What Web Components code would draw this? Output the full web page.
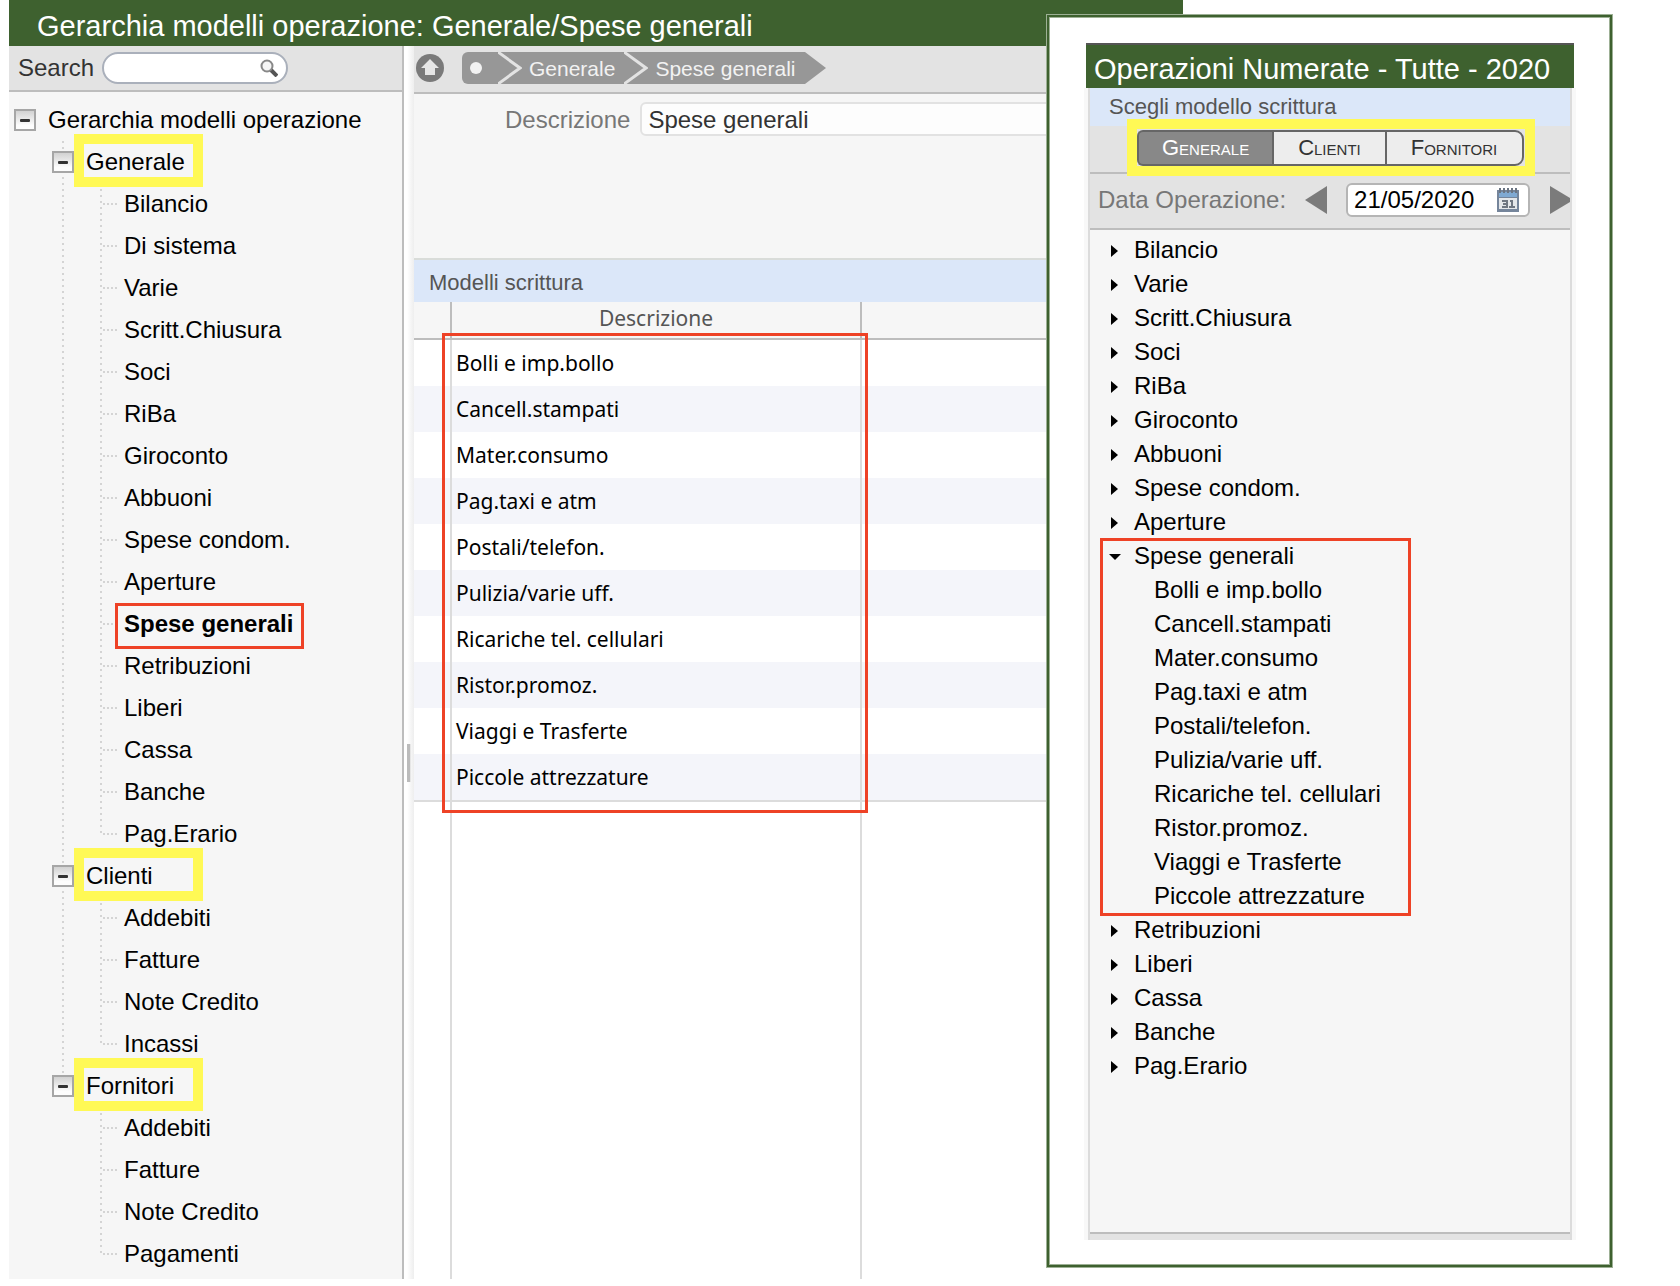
<!DOCTYPE html>
<html lang="it">
<head>
<meta charset="utf-8">
<title>Gerarchia modelli operazione</title>
<style>
  :root {
    --green: #3e612f;
    --bar: #e3e3e3;
    --panel: #f6f6f6;
    --line: #bdbdbd;
    --soft-line: #dcdcdc;
    --blue: #dbe7f9;
    --red: #ee4226;
    --yellow: #fff955;
  }
  * { box-sizing: border-box; }
  body { margin: 0; background: #fff; color: #000; font: 24px/1 "Liberation Sans", Arial, sans-serif; }
</style>
</head>
<body>
<app-desktop>
  <model-window heading="Gerarchia modelli operazione: Generale/Spese generali">
    <search-bar slot="side"></search-bar>
    <tree-item slot="side" class="root" label="Gerarchia modelli operazione" branch>
      <tree-item label="Generale" branch mark="yellow">
        <tree-item label="Bilancio"></tree-item>
        <tree-item label="Di sistema"></tree-item>
        <tree-item label="Varie"></tree-item>
        <tree-item label="Scritt.Chiusura"></tree-item>
        <tree-item label="Soci"></tree-item>
        <tree-item label="RiBa"></tree-item>
        <tree-item label="Giroconto"></tree-item>
        <tree-item label="Abbuoni"></tree-item>
        <tree-item label="Spese condom."></tree-item>
        <tree-item label="Aperture"></tree-item>
        <tree-item label="Spese generali" selected mark="red"></tree-item>
        <tree-item label="Retribuzioni"></tree-item>
        <tree-item label="Liberi"></tree-item>
        <tree-item label="Cassa"></tree-item>
        <tree-item label="Banche"></tree-item>
        <tree-item label="Pag.Erario"></tree-item>
      </tree-item>
      <tree-item label="Clienti" branch mark="yellow">
        <tree-item label="Addebiti"></tree-item>
        <tree-item label="Fatture"></tree-item>
        <tree-item label="Note Credito"></tree-item>
        <tree-item label="Incassi"></tree-item>
      </tree-item>
      <tree-item label="Fornitori" branch mark="yellow">
        <tree-item label="Addebiti"></tree-item>
        <tree-item label="Fatture"></tree-item>
        <tree-item label="Note Credito"></tree-item>
        <tree-item label="Pagamenti"></tree-item>
      </tree-item>
    </tree-item>
    <crumb-bar></crumb-bar>
    <detail-form></detail-form>
    <model-table heading="Modelli scrittura"></model-table>
  </model-window>
  <picker-window slot="overlay" heading="Operazioni Numerate - Tutte - 2020"></picker-window>
</app-desktop>

<script>
const define = (name, html, setup) => {
  const template = document.createElement('template');
  template.innerHTML = '<style>*, *::before, *::after { box-sizing: border-box; }</style>' + html;
  customElements.define(name, class extends HTMLElement {
    connectedCallback() {
      if (this.shadowRoot) return;
      const root = this.attachShadow({ mode: 'open' });
      root.append(template.content.cloneNode(true));
      if (setup) setup(this, root);
    }
  });
};
const fill = (host, root) => {
  root.querySelector('.heading').textContent = host.getAttribute('heading');
};
const entries = ['Bolli e imp.bollo', 'Cancell.stampati', 'Mater.consumo', 'Pag.taxi e atm', 'Postali/telefon.',
  'Pulizia/varie uff.', 'Ricariche tel. cellulari', 'Ristor.promoz.', 'Viaggi e Trasferte', 'Piccole attrezzature'];

define('app-desktop', `
  <style>
    :host { display: block; position: relative; padding-left: 9px; }
  </style>
  <slot></slot><slot name="overlay"></slot>`);

define('model-window', `
  <style>
    :host { display: block; width: calc(70% + 4px); }
    h1 { margin: 0; height: 46px; padding: 4px 28px 0; background: var(--green); color: #fff;
         font-size: 29px; font-weight: 400; line-height: 44px; white-space: nowrap; }
    .body { display: flex; align-items: stretch; }
    aside { flex: none; width: 395px; background: var(--panel); border-right: 2px solid var(--line); padding-bottom: 4px; }
    .splitter { flex: none; width: 10px; display: grid; grid-template-rows: 698fr 38px 497fr; justify-content: center;
         background: linear-gradient(90deg, #fff 30%, #eee); }
    .splitter i { grid-row: 2; width: 4px; background: #bbb; border-right: 1px solid #e6e6e6; }
    main { flex: 1; min-width: 0; display: flex; flex-direction: column; }
  </style>
  <h1 class="heading"></h1>
  <div class="body">
    <aside><slot name="side"></slot></aside>
    <div class="splitter"><i></i></div>
    <main><slot></slot></main>
  </div>`, fill);

define('search-bar', `
  <style>
    :host { display: flex; align-items: center; height: 46px; padding: 0 9px; gap: 8px; margin-bottom: 7px;
            background: var(--bar); border-bottom: 2px solid var(--line); }
    label { color: #333; line-height: 44px; }
    .field { display: flex; align-items: center; width: 186px; height: 32px; padding: 0 8px 0 12px; background: #fff;
             border: 2px solid #aab0bb; border-radius: 16px; }
    input { flex: 1; min-width: 0; border: 0; outline: 0; padding: 0; background: none; font: inherit; }
    svg { flex: none; }
  </style>
  <label for="q">Search</label>
  <div class="field">
    <input id="q" type="text">
    <svg width="18" height="18" viewBox="0 0 18 18" fill="none">
      <path d="M11 11l6 6" stroke="#555" stroke-width="4"/>
      <circle cx="7" cy="7" r="5.5" fill="#f6f6f6" stroke="#888" stroke-width="2"/>
    </svg>
  </div>`);

define('tree-item', `
  <style>
    :host { display: block; }
    :host(:not(.root)) {
      background: repeating-linear-gradient(180deg, #d4d4d4 0 2px, transparent 2px 6px) 15px 0 / 2px 100% no-repeat; }
    :host(:last-child:not(.root)) { background-size: 2px 21px; }
    .row { display: flex; align-items: center; gap: 12px; height: 42px; padding-left: 5px; }
    button, .tick { flex: none; width: 22px; height: 22px; }
    button { display: grid; place-items: center; padding: 0; border: 2px solid #a6a6a6; background: linear-gradient(#d2d2d2, #fdfdfd 80%); }
    button::before { content: ""; width: 10px; height: 3px; border-radius: 1px; background: #333; }
    .tick { display: flex; align-items: center; padding-left: 13px; }
    .tick::before { content: ""; flex: none; width: 16px; height: 2px;
      background: repeating-linear-gradient(90deg, #d4d4d4 0 2px, transparent 2px 4px); }
    :host([branch]) .tick, :host(:not([branch])) button { display: none; }
    .label { position: relative; line-height: 42px; white-space: nowrap; }
    :host([selected]) .label { font-weight: 700; }
    :host([mark]) .label::after { content: ""; position: absolute; }
    :host([mark=yellow]) .label::after { top: -7px; left: -12px; width: 129px; height: 53px; border: 10px solid var(--yellow); }
    :host([mark=red]) .label::after { inset: 0 -11px -4px -9px; border: 3px solid var(--red); }
    .children { padding-left: 38px; }
  </style>
  <div class="row"><button type="button"></button><span class="tick"></span><span class="label"></span></div>
  <div class="children"><slot></slot></div>`, (host, root) => {
    root.querySelector('.label').textContent = host.getAttribute('label');
    root.querySelector('button').setAttribute('aria-label', host.getAttribute('label'));
  });

define('crumb-bar', `
  <style>
    :host { display: flex; align-items: center; height: 48px; padding: 0 2px 2px; gap: 18px;
            background: var(--bar); border-bottom: 2px solid var(--line); color: #f2f2f2; font-size: 21px; }
    svg { display: block; flex: none; }
    button { border: 0; padding: 0; margin: 0; background: none; color: inherit; font: inherit; }
    nav { display: flex; height: 32px; }
    nav button { background: #979797; line-height: 34px; padding: 0 9px 0 7px; white-space: nowrap; }
    nav button.home { width: 36px; padding: 0 0 0 8px; border-radius: 6px 0 0 6px; }
  </style>
  <button type="button" aria-label="Su">
    <svg width="28" height="28" viewBox="0 0 28 28"><circle cx="14" cy="14" r="14" fill="#7a7a7a"/>
      <path d="M14 5l9 9h-4v7H9v-7H5z" fill="#e6e6e6"/></svg>
  </button>
  <nav>
    <button type="button" class="home" aria-label="Radice">
      <svg width="12" height="12" viewBox="0 0 12 12"><circle cx="6" cy="6" r="6" fill="#f2f2f2"/></svg></button>
    <svg width="24" height="32" viewBox="0 0 24 32"><path d="M0 0h24v32H0z" fill="#979797"/><path d="M0 0l22 16L0 32" fill="none" stroke="#e3e3e3" stroke-width="3"/></svg>
    <button type="button">Generale</button>
    <svg width="24" height="32" viewBox="0 0 24 32"><path d="M0 0h24v32H0z" fill="#979797"/><path d="M0 0l22 16L0 32" fill="none" stroke="#e3e3e3" stroke-width="3"/></svg>
    <button type="button">Spese generali</button>
    <svg width="21" height="32" viewBox="0 0 21 32"><path d="M0 0l21 16L0 32z" fill="#979797"/></svg>
  </nav>`);

define('detail-form', `
  <style>
    :host { display: flex; align-items: flex-start; gap: 10px; height: 166px; padding: 8px 8px 0 91px;
            background: var(--panel); border-bottom: 2px solid #d9dcd9; }
    label { color: #777; line-height: 36px; }
    input { flex: 1; min-width: 0; height: 34px; padding: 1px 6px 0; border: 2px solid #e2e2e2; border-radius: 6px;
            background: #fdfdfd; color: #333; font: inherit; }
  </style>
  <label for="d">Descrizione</label><input id="d" type="text" value="Spese generali">`);

define('model-table', `
  <style>
    :host { display: flex; flex-direction: column; flex: 1; }
    h2 { margin: 0; padding: 2px 15px 0; height: 42px; background: var(--blue); color: #555; font-size: 22px; font-weight: 400; line-height: 42px; }
    .grid { position: relative; flex: 1;
      background: linear-gradient(var(--soft-line) 0 0) 36px 0 / 2px 100% no-repeat,
                  linear-gradient(var(--soft-line) 0 0) 446px 0 / 2px 100% no-repeat #fff; }
    table { width: 100%; border-collapse: separate; border-spacing: 0; table-layout: fixed;
            font: 21px/24px "Noto Sans", sans-serif; border-bottom: 2px solid var(--soft-line); }
    .c1 { width: 38px; } .c2 { width: 410px; }
    th { height: 38px; padding: 0 0 4px; background: var(--panel); color: #555; font-weight: 400; border-bottom: 2px solid var(--line); }
    td { height: 46px; padding: 0 4px; }
    th, td { border-right: 2px solid var(--soft-line); }
    th { border-right-color: var(--line); }
    th:last-child, td:last-child { border-right: 0; }
    tbody tr:nth-child(even) { background: #f4f5fa; }
    .frame { position: absolute; left: 28px; top: 31px; width: 426px; height: 480px; border: 3px solid var(--red); }
  </style>
  <h2 class="heading"></h2>
  <div class="grid">
    <table>
      <colgroup><col class="c1"><col class="c2"><col></colgroup>
      <thead><tr><th></th><th>Descrizione</th><th></th></tr></thead>
      <tbody></tbody>
    </table>
    <div class="frame"></div>
  </div>`, (host, root) => {
    fill(host, root);
    root.querySelector('tbody').innerHTML = entries.map(t => `<tr><td></td><td>${t}</td><td></td></tr>`).join('');
  });

define('segment-control', `
  <style>
    :host { display: flex; position: relative; height: 36px; }
    :host::after { content: ""; position: absolute; inset: -11px -11px -10px -10px; border: 10px solid var(--yellow); pointer-events: none; }
    button { margin: 0; padding: 0 24px; border: 2px solid #666; border-right-width: 0; background: #ededed; color: #333;
             font: 22px/32px "Liberation Sans", Arial, sans-serif; font-variant: small-caps; }
    button:first-of-type { padding: 0 23px; border-radius: 6px 0 0 6px; background: #888; color: #fff; }
    button:last-of-type { padding: 0 25px 0 24px; border-radius: 0 9px 9px 0; border-right-width: 2px; }
  </style>
  <button type="button">Generale</button><button type="button">Clienti</button><button type="button">Fornitori</button>`);

define('date-bar', `
  <style>
    :host { display: flex; align-items: center; height: 56px; padding: 0 0 2px 8px; background: var(--bar); border-bottom: 2px solid var(--line); }
    label { color: #777; line-height: 50px; white-space: nowrap; }
    button { flex: none; border: 0; padding: 0; background: none; }
    svg { display: block; }
    .prev { margin: 0 19px; }
    .field { display: flex; align-items: center; flex: 1; min-width: 0; max-width: 184px; height: 34px; padding: 0 8px 0 6px; background: #fff;
             border: 2px solid #b5b5b5; border-radius: 6px; }
    input { flex: 1; min-width: 0; border: 0; padding: 0; background: none; color: #000; font: inherit; }
    .next { margin-left: auto; }
  </style>
  <label for="date">Data Operazione:</label>
  <button type="button" class="prev" aria-label="Giorno precedente"><svg width="22" height="28" viewBox="0 0 22 28"><path d="M22 0v28L0 14z" fill="#7b7b7b"/></svg></button>
  <div class="field">
    <input id="date" type="text" value="21/05/2020">
    <button type="button" aria-label="Calendario">
      <svg width="24" height="24" viewBox="0 0 24 24">
        <path d="M1 2h22v22H1z" fill="#75859b"/><path d="M3 10h18v11H3z" fill="#e4e7ea"/><path d="M3 4h18v5H3z" fill="#7fa9d2"/>
        <path d="M4 0v5M8 0v5M12 0v5M16 0v5M20 0v5" stroke="#6a7482" stroke-width="2"/>
        <path d="M6 13h5v6H6M7 16h4M14 13h2v6M13 19h6" fill="none" stroke="#6f7782" stroke-width="2"/>
      </svg>
    </button>
  </div>
  <button type="button" class="next" aria-label="Giorno successivo"><svg width="20" height="28" viewBox="0 0 20 28"><path d="M0 0l20 12v4L0 28z" fill="#7b7b7b"/></svg></button>`);

define('menu-group', `
  <style>
    :host { display: block; position: relative; }
    .row, .child { line-height: 34px; height: 34px; white-space: nowrap; }
    .row { display: flex; align-items: center; }
    .arrow { flex: none; display: grid; place-items: center; width: 44px; padding: 2px 0 0 5px; }
    .arrow::before { content: ""; border: 6px solid transparent; border-width: 6px 0 6px 7px; border-left-color: #000; }
    :host([open]) .arrow::before { border: 6px solid transparent; border-bottom-width: 0; border-top-color: #000; }
    .child { padding-left: 64px; }
    :host([open])::after { content: ""; position: absolute; left: 10px; top: -1px; bottom: -3px; width: 311px; border: 3px solid var(--red); }
  </style>
  <div class="row"><span class="arrow"></span><span class="label"></span></div>
  <div class="children"></div>`, (host, root) => {
    root.querySelector('.label').textContent = host.getAttribute('label');
    if (host.hasAttribute('open'))
      root.querySelector('.children').innerHTML = entries.map(t => `<div class="child">${t}</div>`).join('');
  });

define('picker-window', `
  <style>
    :host { position: absolute; top: 14px; right: 67px; bottom: 11px; width: 567px; display: flex; flex-direction: column;
            padding: 28px 36px 27px 37px; background: #fff; border: 1px solid #9db095;
            box-shadow: inset 0 0 0 2px var(--green), inset 0 0 0 3px #9db095; }
    h1 { margin: 0 2px; height: 45px; padding: 4px 8px 0; background: var(--green); border-top: 2px solid #555; color: #fff;
         font-size: 29px; font-weight: 400; line-height: 40px; white-space: nowrap; }
    .pad { flex: 1; display: flex; padding: 0 4px; background: #f8f8f8; }
    .body { flex: 1; min-width: 0; display: flex; flex-direction: column; background: var(--panel); border: 2px solid var(--soft-line); border-width: 0 2px; }
    h2 { margin: 0; height: 38px; padding: 0 19px; background: var(--blue); color: #555; font-size: 22px; font-weight: 400; line-height: 38px; }
    .tabs { display: flex; height: 48px; padding: 4px 0 0 47px; background: var(--bar); border-bottom: 2px solid var(--line); }
    .list { flex: 1; padding-top: 3px; }
    .foot { height: 8px; background: var(--bar); border-top: 2px solid var(--line); }
  </style>
  <h1 class="heading"></h1>
  <div class="pad"><div class="body">
    <h2>Scegli modello scrittura</h2>
    <div class="tabs"><segment-control></segment-control></div>
    <date-bar></date-bar>
    <div class="list">
      <menu-group label="Bilancio"></menu-group>
      <menu-group label="Varie"></menu-group>
      <menu-group label="Scritt.Chiusura"></menu-group>
      <menu-group label="Soci"></menu-group>
      <menu-group label="RiBa"></menu-group>
      <menu-group label="Giroconto"></menu-group>
      <menu-group label="Abbuoni"></menu-group>
      <menu-group label="Spese condom."></menu-group>
      <menu-group label="Aperture"></menu-group>
      <menu-group label="Spese generali" open></menu-group>
      <menu-group label="Retribuzioni"></menu-group>
      <menu-group label="Liberi"></menu-group>
      <menu-group label="Cassa"></menu-group>
      <menu-group label="Banche"></menu-group>
      <menu-group label="Pag.Erario"></menu-group>
    </div>
    <div class="foot"></div>
  </div></div>`, fill);
</script>
</body>
</html>
